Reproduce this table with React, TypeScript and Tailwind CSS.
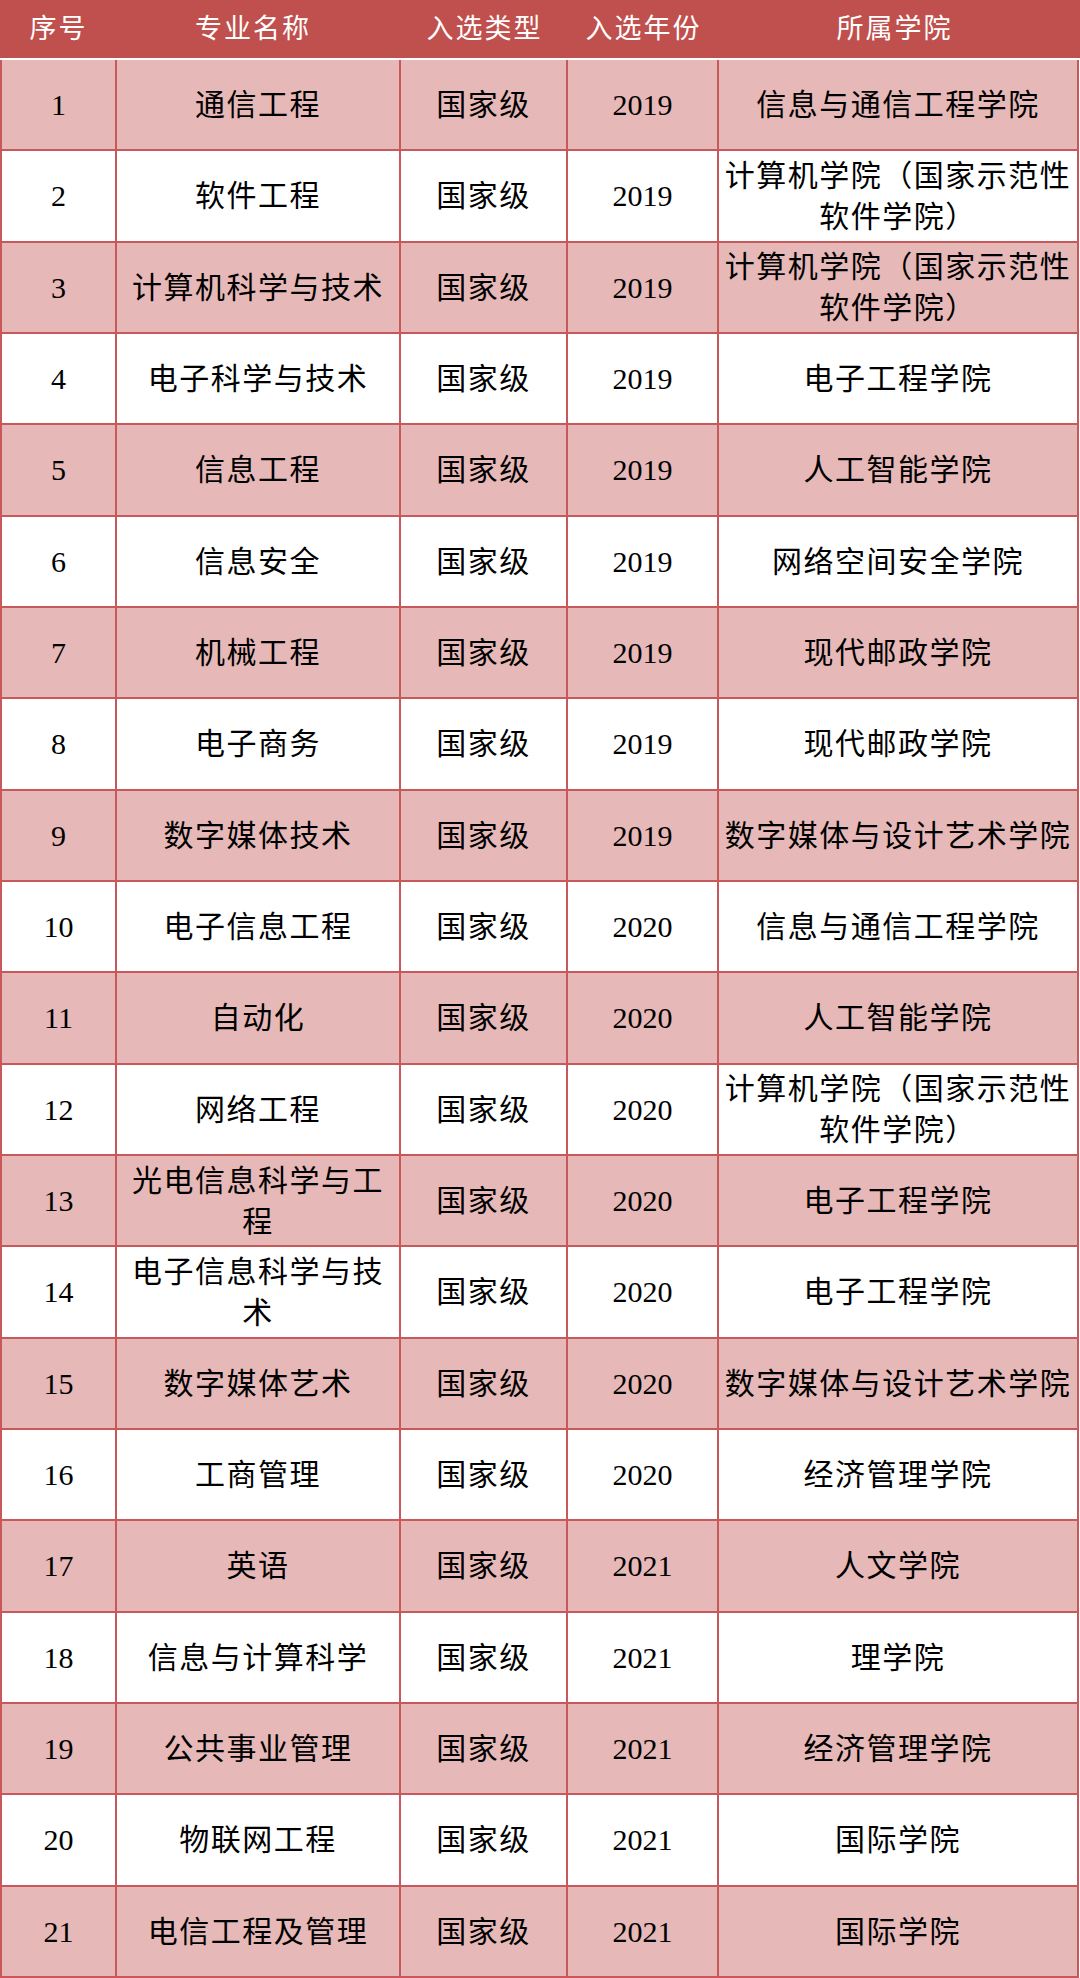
import React from "react";

type Row = [string, string[], string, string, string[]];

const rows: Row[] = [
  ["1", ["通信工程"], "国家级", "2019", ["信息与通信工程学院"]],
  ["2", ["软件工程"], "国家级", "2019", ["计算机学院（国家示范性", "软件学院）"]],
  ["3", ["计算机科学与技术"], "国家级", "2019", ["计算机学院（国家示范性", "软件学院）"]],
  ["4", ["电子科学与技术"], "国家级", "2019", ["电子工程学院"]],
  ["5", ["信息工程"], "国家级", "2019", ["人工智能学院"]],
  ["6", ["信息安全"], "国家级", "2019", ["网络空间安全学院"]],
  ["7", ["机械工程"], "国家级", "2019", ["现代邮政学院"]],
  ["8", ["电子商务"], "国家级", "2019", ["现代邮政学院"]],
  ["9", ["数字媒体技术"], "国家级", "2019", ["数字媒体与设计艺术学院"]],
  ["10", ["电子信息工程"], "国家级", "2020", ["信息与通信工程学院"]],
  ["11", ["自动化"], "国家级", "2020", ["人工智能学院"]],
  ["12", ["网络工程"], "国家级", "2020", ["计算机学院（国家示范性", "软件学院）"]],
  ["13", ["光电信息科学与工", "程"], "国家级", "2020", ["电子工程学院"]],
  ["14", ["电子信息科学与技", "术"], "国家级", "2020", ["电子工程学院"]],
  ["15", ["数字媒体艺术"], "国家级", "2020", ["数字媒体与设计艺术学院"]],
  ["16", ["工商管理"], "国家级", "2020", ["经济管理学院"]],
  ["17", ["英语"], "国家级", "2021", ["人文学院"]],
  ["18", ["信息与计算科学"], "国家级", "2021", ["理学院"]],
  ["19", ["公共事业管理"], "国家级", "2021", ["经济管理学院"]],
  ["20", ["物联网工程"], "国家级", "2021", ["国际学院"]],
  ["21", ["电信工程及管理"], "国家级", "2021", ["国际学院"]],
];

const font = { fontFamily: '"Liberation Serif", "Noto Sans CJK SC", serif' };

function Lines({ lines }: { lines: string[] }) {
  return (
    <div className="flex flex-col items-center leading-[41px] whitespace-nowrap tracking-[1.5px]">
      {lines.map((l, i) => (
        <span key={i}>{l}</span>
      ))}
    </div>
  );
}

export default function App() {
  return (
    <div className="w-[1080px] h-[1978px] bg-white text-black" style={font}>
      <div className="h-[58px] bg-[#c0504d] text-white grid grid-cols-[117px_284px_167px_151px_361px] items-center text-[27px] tracking-[2px]">
        <div className="text-center">序号</div>
        <div className="text-center pr-[12px]">专业名称</div>
        <div className="text-center">入选类型</div>
        <div className="text-center">入选年份</div>
        <div className="text-center pr-[10px]">所属学院</div>
      </div>
      <div className="h-[2px] bg-white" />
      <div className="w-[1079px] h-[1918px] flex flex-col border-l-2 border-[#c9585a]">
        {rows.map((r, i) => (
          <div
            key={i}
            className={`flex-1 grid grid-cols-[115px_284px_167px_151px_360px] border-b-2 border-[#c9585a] text-[30px] ${
              i % 2 === 0 ? "bg-[#e6b8b7]" : "bg-white"
            }`}
          >
            <div className="flex items-center justify-center border-r-2 border-[#c9585a]">{r[0]}</div>
            <div className="flex items-center justify-center border-r-2 border-[#c9585a]">
              <Lines lines={r[1]} />
            </div>
            <div className="flex items-center justify-center border-r-2 border-[#c9585a] tracking-[1.5px]">{r[2]}</div>
            <div className="flex items-center justify-center border-r-2 border-[#c9585a]">{r[3]}</div>
            <div className="flex items-center justify-center border-r-2 border-[#c9585a]">
              <Lines lines={r[4]} />
            </div>
          </div>
        ))}
      </div>
    </div>
  );
}
